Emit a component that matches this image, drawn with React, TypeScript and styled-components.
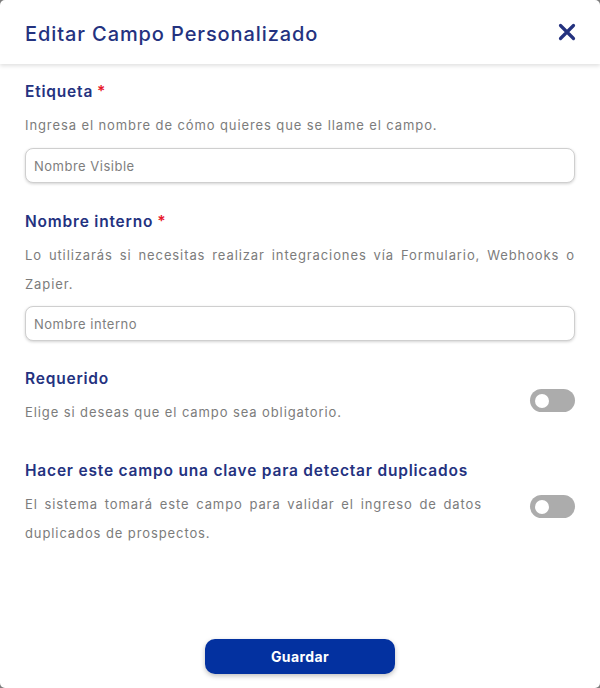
import React from "react";
import styled, { createGlobalStyle } from "styled-components";

const Global = createGlobalStyle`
  html, body { margin: 0; padding: 0; }
  body { background: #7d7d7d; font-family: Inter, "Open Sans", "Liberation Sans", sans-serif; }
  * { box-sizing: border-box; }
`;

const Modal = styled.div`
  width: 600px;
  height: 688px;
  background: #fff;
  border-radius: 5px;
  display: flex;
  flex-direction: column;
  overflow: hidden;
`;

const Header = styled.div`
  height: 64px;
  flex-shrink: 0;
  display: flex;
  align-items: center;
  justify-content: space-between;
  padding: 0 23px 0 25px;
  box-shadow: 0 2px 4px rgba(0, 0, 0, 0.12);
  position: relative;
  z-index: 1;
`;

const Title = styled.h1`
  margin: 0 0 -3px 0;
  font-size: 20px;
  font-weight: 500;
  color: #24327f;
  letter-spacing: 0.9px;
`;

const CloseButton = styled.button`
  border: 0;
  background: none;
  padding: 0;
  width: 20px;
  height: 20px;
  display: flex;
  align-items: center;
  justify-content: center;
  cursor: pointer;
`;

const Body = styled.div`
  flex: 1;
  padding: 18px 25px 0 25px;
  display: flex;
  flex-direction: column;
`;

const Section = styled.div<{ $gap?: number }>`
  display: flex;
  flex-direction: column;
  margin-bottom: ${(p) => p.$gap ?? 0}px;
`;

const Label = styled.div`
  font-size: 15.5px;
  font-weight: 600;
  color: #24327f;
  line-height: 20px;
  letter-spacing: 0.8px;
`;

const Star = styled.span`
  color: #e8192c;
  margin-left: 4px;
`;

const Desc = styled.p`
  margin: 9px 0 0 0;
  font-size: 13px;
  color: #7c7c7c;
  line-height: 29px;
  text-align: justify;
  letter-spacing: 0.9px;
`;

const Input = styled.input<{ $top?: number }>`
  margin-top: ${(p) => p.$top ?? 8}px;
  width: 100%;
  height: 35px;
  border: 1px solid #cfcfcf;
  border-radius: 8px;
  box-shadow: 0 1px 3px rgba(0, 0, 0, 0.18);
  padding: 0 8px;
  font-family: inherit;
  font-size: 13px;
  letter-spacing: 0.5px;
  color: #333;
  outline: none;
  &::placeholder { color: #7e7e7e; }
`;

const ToggleRow = styled.div`
  display: flex;
  align-items: flex-start;
  justify-content: space-between;
  gap: 48px;
`;

const ToggleText = styled.div`
  flex: 1;
  display: flex;
  flex-direction: column;
`;

const Switch = styled.div<{ $top: number }>`
  width: 45px;
  height: 23px;
  border-radius: 12px;
  background: #acacac;
  flex-shrink: 0;
  margin-top: ${(p) => p.$top}px;
  display: flex;
  align-items: center;
  padding-left: 5px;
`;

const Knob = styled.span`
  width: 14px;
  height: 14px;
  border-radius: 50%;
  background: #fff;
`;

const Footer = styled.div`
  display: flex;
  justify-content: center;
  padding-bottom: 14px;
`;

const SaveButton = styled.button`
  width: 190px;
  height: 35px;
  border: 0;
  border-radius: 10px;
  background: #0331a0;
  color: #fff;
  font-family: inherit;
  font-size: 14px;
  font-weight: 700;
  letter-spacing: 0.4px;
  box-shadow: 0 2px 5px rgba(0, 0, 0, 0.25);
  cursor: pointer;
`;

export default function App() {
  return (
    <>
      <Global />
      <Modal>
        <Header>
          <Title>Editar Campo Personalizado</Title>
          <CloseButton aria-label="Cerrar">
            <svg width="18" height="18" viewBox="0 0 18 18">
              <path d="M2.5 2.5 L15.5 15.5 M15.5 2.5 L2.5 15.5" stroke="#24327f" strokeWidth="3.2" strokeLinecap="round" />
            </svg>
          </CloseButton>
        </Header>
        <Body>
          <Section $gap={29}>
            <Label>Etiqueta<Star>*</Star></Label>
            <Desc>Ingresa el nombre de cómo quieres que se llame el campo.</Desc>
            <Input placeholder="Nombre Visible" />
          </Section>
          <Section $gap={28}>
            <Label>Nombre interno<Star>*</Star></Label>
            <Desc>Lo utilizarás si necesitas realizar integraciones vía Formulario, Webhooks o Zapier.</Desc>
            <Input $top={7} placeholder="Nombre interno" />
          </Section>
          <Section $gap={34}>
            <ToggleRow>
              <ToggleText>
                <Label>Requerido</Label>
                <Desc>Elige si deseas que el campo sea obligatorio.</Desc>
              </ToggleText>
              <Switch $top={20}><Knob /></Switch>
            </ToggleRow>
          </Section>
          <Section>
            <Label>Hacer este campo una clave para detectar duplicados</Label>
            <ToggleRow>
              <ToggleText>
                <Desc>El sistema tomará este campo para validar el ingreso de datos duplicados de prospectos.</Desc>
              </ToggleText>
              <Switch $top={14}><Knob /></Switch>
            </ToggleRow>
          </Section>
        </Body>
        <Footer>
          <SaveButton>Guardar</SaveButton>
        </Footer>
      </Modal>
    </>
  );
}
